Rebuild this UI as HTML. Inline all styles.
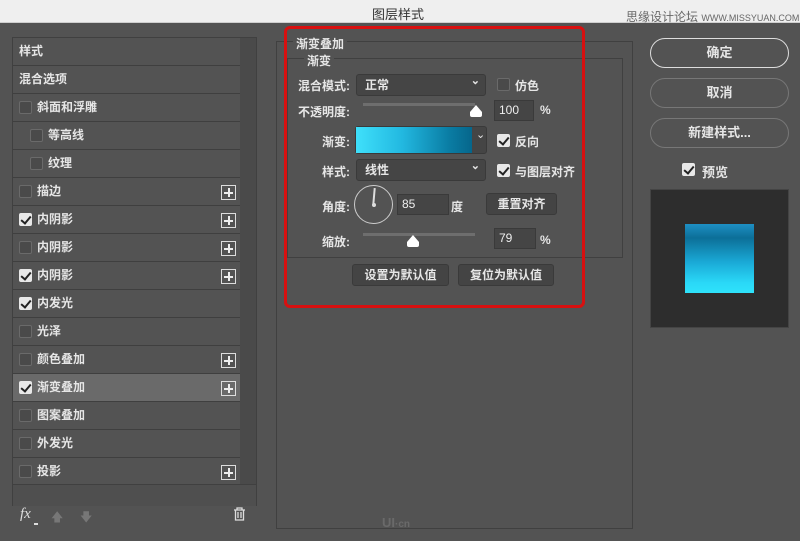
<!DOCTYPE html>
<html><head><meta charset="utf-8"><style>
*{margin:0;padding:0;box-sizing:border-box}
body{width:800px;height:541px;background:#535353;font-family:"Liberation Sans","Noto Sans CJK SC",sans-serif;color:#e6e6e6;font-size:12px;position:relative;overflow:hidden}
.a{position:absolute}
.title{left:0;top:0;width:800px;height:23px;background:#efefef;border-bottom:1px solid #cfcfcf}
.list{left:12px;top:37px;width:245px;height:469px;border:1px solid #404040;background:#4a4a4a}
.item{position:absolute;left:0;width:227px;height:28px;background:#535353;border-bottom:1px solid #3f3f3f;line-height:27px;font-size:12px;font-weight:bold}
.cb{position:absolute;width:13px;height:13px;border:1px solid #6a6a6a;border-radius:2px;background:#4a4a4a}
.cb.on{background:#e8e8e8;border-color:#e8e8e8}
.cb.on:after{content:"";position:absolute;left:3px;top:0px;width:4px;height:8px;border:solid #222;border-width:0 2px 2px 0;transform:rotate(40deg)}
.plus{position:absolute;left:208px;top:7px;width:15px;height:15px;border:1px solid #ddd;}
.plus:before{content:"";position:absolute;left:2px;top:6px;width:9px;height:2px;background:#eee}
.plus:after{content:"";position:absolute;left:6px;top:2px;width:2px;height:9px;background:#eee}
.box{border:1px solid #404040}
.lbl{font-size:12px;font-weight:bold;color:#e6e6e6}
.dd{background:#454545;border:1px solid #3a3a3a;border-radius:3px;height:22px;line-height:20px;padding-left:8px;font-weight:bold}
.dd:after{content:"⌄";position:absolute;right:5px;top:-4px;font-size:11px}
.inp{background:#454545;border:1px solid #3a3a3a;height:21px;line-height:19px;padding-left:4px;font-size:12px;color:#eee}
.btn{background:#444;border:1px solid #3a3a3a;border-radius:3px;height:22px;line-height:20px;text-align:center;font-weight:bold}
.rbtn{left:650px;width:139px;height:30px;border:1px solid #888;border-radius:15px;text-align:center;line-height:28px;font-weight:bold;font-size:13px}
.track{height:3px;background:#6e6e6e}
.thumb{width:0;height:0;border-left:6px solid transparent;border-right:6px solid transparent;border-bottom:7px solid #fff}
.thumbb{width:12px;height:5px;background:#fff;border-radius:0 0 2px 2px}
</style></head><body>
<div class="a title"></div>
<div class="a" style="left:372px;top:4px;font-size:13px;color:#333">图层样式</div>
<div class="a" style="left:626px;top:8px;font-size:12px;color:#666">思缘设计论坛 <span style="font-size:9px">WWW.MISSYUAN.COM</span></div>

<div class="a list">
<div class="item" style="top:0"><span style="margin-left:6px">样式</span></div>
<div class="item" style="top:28px"><span style="margin-left:6px">混合选项</span></div>
<div class="item" style="top:56px"><div class="cb" style="left:6px;top:7px"></div><span style="margin-left:24px">斜面和浮雕</span></div>
<div class="item" style="top:84px"><div class="cb" style="left:17px;top:7px"></div><span style="margin-left:35px">等高线</span></div>
<div class="item" style="top:112px"><div class="cb" style="left:17px;top:7px"></div><span style="margin-left:35px">纹理</span></div>
<div class="item" style="top:140px"><div class="cb" style="left:6px;top:7px"></div><span style="margin-left:24px">描边</span><div class="plus"></div></div>
<div class="item" style="top:168px"><div class="cb on" style="left:6px;top:7px"></div><span style="margin-left:24px">内阴影</span><div class="plus"></div></div>
<div class="item" style="top:196px"><div class="cb" style="left:6px;top:7px"></div><span style="margin-left:24px">内阴影</span><div class="plus"></div></div>
<div class="item" style="top:224px"><div class="cb on" style="left:6px;top:7px"></div><span style="margin-left:24px">内阴影</span><div class="plus"></div></div>
<div class="item" style="top:252px"><div class="cb on" style="left:6px;top:7px"></div><span style="margin-left:24px">内发光</span></div>
<div class="item" style="top:280px"><div class="cb" style="left:6px;top:7px"></div><span style="margin-left:24px">光泽</span></div>
<div class="item" style="top:308px"><div class="cb" style="left:6px;top:7px"></div><span style="margin-left:24px">颜色叠加</span><div class="plus"></div></div>
<div class="item" style="top:336px;background:#6a6a6a"><div class="cb on" style="left:6px;top:7px"></div><span style="margin-left:24px">渐变叠加</span><div class="plus"></div></div>
<div class="item" style="top:364px"><div class="cb" style="left:6px;top:7px"></div><span style="margin-left:24px">图案叠加</span></div>
<div class="item" style="top:392px"><div class="cb" style="left:6px;top:7px"></div><span style="margin-left:24px">外发光</span></div>
<div class="item" style="top:420px"><div class="cb" style="left:6px;top:7px"></div><span style="margin-left:24px">投影</span><div class="plus"></div></div>
<div class="item" style="top:448px;height:2px;border:none"></div>
<div style="position:absolute;left:0;top:446px;width:243px;height:22px;background:#4f4f4f;border-top:1px solid #404040"></div>
</div>
<div class="a" style="left:20px;top:506px;font-style:italic;font-size:15px;font-family:'Liberation Serif',serif;color:#ddd">fx</div>
<div class="a" style="left:34px;top:523px;width:4px;height:2px;background:#ddd"></div>
<div class="a" style="left:51px;top:508px;color:#777;font-size:12px">🡅</div>
<div class="a" style="left:80px;top:508px;color:#777;font-size:12px">🡇</div>
<svg class="a" style="left:233px;top:507px" width="13" height="14"><path d="M1 3h11M4 3V1h5v2M2.5 3.5v9.5h8V3.5M5 5v6M8 5v6" stroke="#ddd" fill="none" stroke-width="1.3"/></svg>

<div class="a box" style="left:276px;top:41px;width:357px;height:488px"></div>
<div class="a box" style="left:287px;top:58px;width:336px;height:200px"></div>
<div class="a" style="left:293px;top:35px;background:#535353;padding:0 3px;font-weight:bold">渐变叠加</div>
<div class="a" style="left:304px;top:52px;background:#535353;padding:0 3px;font-weight:bold">渐变</div>
<div class="a" style="left:284px;top:26px;width:301px;height:282px;border:3px solid #d81010;border-radius:6px"></div>

<div class="a lbl" style="left:298px;top:77px">混合模式:</div>
<div class="a dd" style="left:356px;top:74px;width:130px">正常</div>
<div class="a cb" style="left:497px;top:78px"></div>
<div class="a lbl" style="left:515px;top:77px">仿色</div>

<div class="a lbl" style="left:298px;top:103px">不透明度:</div>
<div class="a track" style="left:363px;top:103px;width:112px"></div>
<div class="a thumb" style="left:470px;top:105px"></div><div class="a thumbb" style="left:470px;top:112px"></div>
<div class="a inp" style="left:494px;top:100px;width:40px">100</div>
<div class="a lbl" style="left:540px;top:103px">%</div>

<div class="a lbl" style="left:322px;top:133px">渐变:</div>
<div class="a" style="left:355px;top:126px;width:132px;height:28px;border:1px solid #3a3a3a;background:#454545;border-radius:3px"></div>
<div class="a" style="left:356px;top:127px;width:116px;height:26px;background:linear-gradient(90deg,#3fe0fb,#22b8e0 40%,#0a7da4 80%,#06668b)"></div>
<div class="a" style="left:476px;top:128px;font-size:11px">⌄</div>
<div class="a cb on" style="left:497px;top:134px"></div>
<div class="a lbl" style="left:515px;top:133px">反向</div>

<div class="a lbl" style="left:322px;top:163px">样式:</div>
<div class="a dd" style="left:356px;top:159px;width:130px">线性</div>
<div class="a cb on" style="left:497px;top:164px"></div>
<div class="a lbl" style="left:515px;top:163px">与图层对齐</div>

<div class="a lbl" style="left:322px;top:198px">角度:</div>
<div class="a" style="left:354px;top:185px;width:39px;height:39px;border:1px solid #ccc;border-radius:50%"></div>
<div class="a" style="left:373px;top:188px;width:1.5px;height:17px;background:#ddd;transform:rotate(5deg)"></div>
<div class="a" style="left:372px;top:203px;width:4px;height:4px;background:#ddd;border-radius:50%"></div>
<div class="a inp" style="left:397px;top:194px;width:52px">85</div>
<div class="a lbl" style="left:451px;top:198px">度</div>
<div class="a btn" style="left:486px;top:193px;width:71px">重置对齐</div>

<div class="a lbl" style="left:322px;top:233px">缩放:</div>
<div class="a track" style="left:363px;top:233px;width:112px"></div>
<div class="a thumb" style="left:407px;top:235px"></div><div class="a thumbb" style="left:407px;top:242px"></div>
<div class="a inp" style="left:494px;top:228px;width:42px">79</div>
<div class="a lbl" style="left:540px;top:233px">%</div>

<div class="a btn" style="left:352px;top:264px;width:97px">设置为默认值</div>
<div class="a btn" style="left:458px;top:264px;width:96px">复位为默认值</div>

<div class="a" style="left:382px;top:515px;color:#6a6a6a;font-weight:bold;font-size:13px">UI<span style="font-size:10px">·cn</span></div>

<div class="a rbtn" style="top:38px;border-color:#ddd">确定</div>
<div class="a rbtn" style="top:78px;border-color:#777">取消</div>
<div class="a rbtn" style="top:118px;border-color:#777">新建样式...</div>
<div class="a cb on" style="left:682px;top:163px"></div>
<div class="a lbl" style="left:702px;top:162px;font-size:13px">预览</div>
<div class="a" style="left:650px;top:189px;width:139px;height:139px;background:#2d2d2d;border:1px solid #444"></div>
<div class="a" style="left:685px;top:224px;width:69px;height:69px;background:linear-gradient(180deg,#1e8fc4,#0c6f98 20%,#1aa9d6 55%,#2ad8f7 85%,#2ee2fb)"></div>
</body></html>
